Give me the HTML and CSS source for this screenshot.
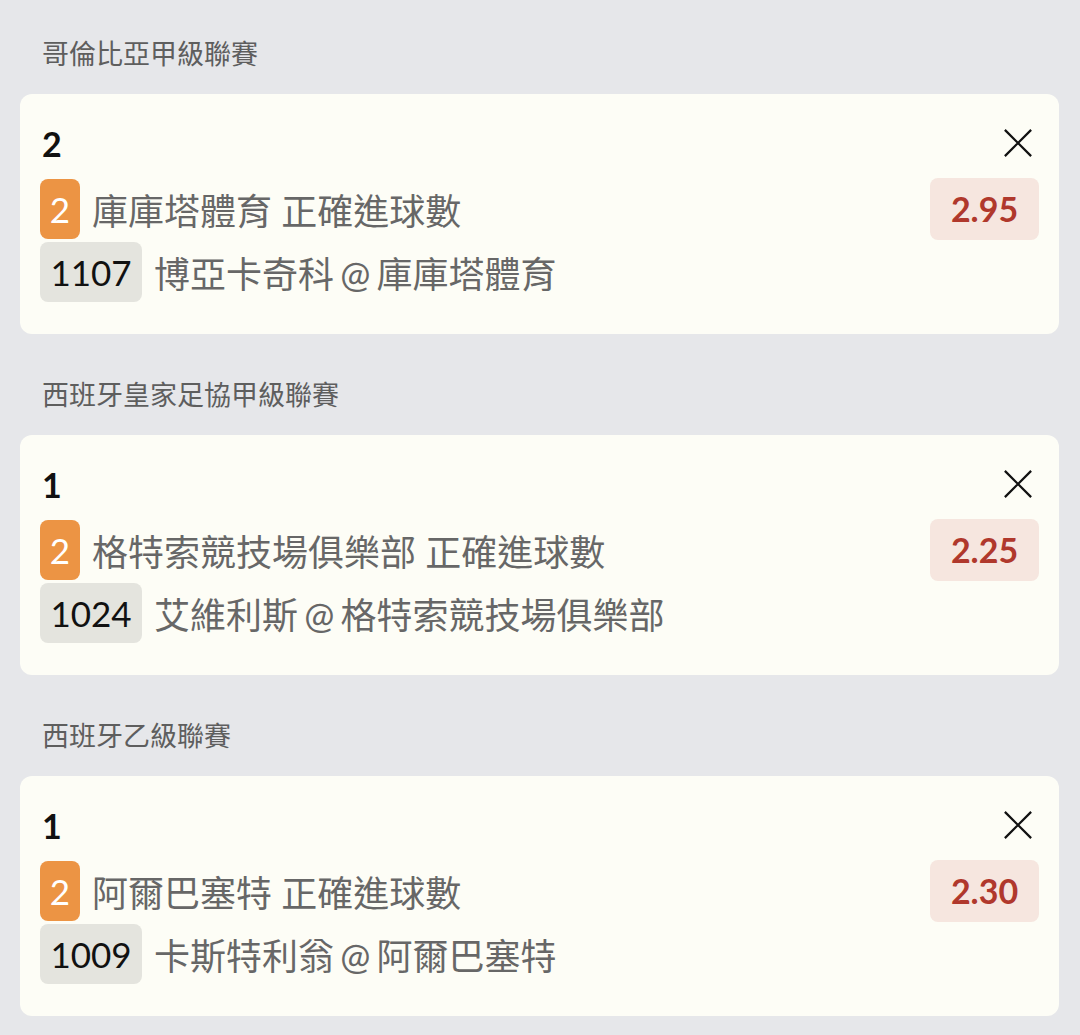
FILE: index.html
```html
<html>
<head>
    <title>投注單</title>
    <link rel="stylesheet" href="styles.css">
</head>
<body>
<div class="slip">
    <div class="section">
        <div class="league">哥倫比亞甲級聯賽</div>
        <div class="card">
            <div class="row top">
                <span class="pick">2</span>
                <svg class="close" viewBox="0 0 32 32"><path d="M2 2L30 30M30 2L2 30"/></svg>
            </div>
            <div class="row">
                <div class="line"><span class="tag">2</span><span class="desc">庫庫塔體育 正確進球數</span></div>
                <span class="odds">2.95</span>
            </div>
            <div class="row">
                <div class="line"><span class="match-no">1107</span><span class="desc teams">博亞卡奇科 @ 庫庫塔體育</span></div>
            </div>
        </div>
    </div>

    <div class="section">
        <div class="league">西班牙皇家足協甲級聯賽</div>
        <div class="card">
            <div class="row top">
                <span class="pick">1</span>
                <svg class="close" viewBox="0 0 32 32"><path d="M2 2L30 30M30 2L2 30"/></svg>
            </div>
            <div class="row">
                <div class="line"><span class="tag">2</span><span class="desc">格特索競技場俱樂部 正確進球數</span></div>
                <span class="odds">2.25</span>
            </div>
            <div class="row">
                <div class="line"><span class="match-no">1024</span><span class="desc teams">艾維利斯 @ 格特索競技場俱樂部</span></div>
            </div>
        </div>
    </div>

    <div class="section">
        <div class="league">西班牙乙級聯賽</div>
        <div class="card">
            <div class="row top">
                <span class="pick">1</span>
                <svg class="close" viewBox="0 0 32 32"><path d="M2 2L30 30M30 2L2 30"/></svg>
            </div>
            <div class="row">
                <div class="line"><span class="tag">2</span><span class="desc">阿爾巴塞特 正確進球數</span></div>
                <span class="odds">2.30</span>
            </div>
            <div class="row">
                <div class="line"><span class="match-no">1009</span><span class="desc teams">卡斯特利翁 @ 阿爾巴塞特</span></div>
            </div>
        </div>
    </div>
</div>
</body>
</html>
```

FILE: styles.css
```css
body {
    margin: 0;
    background-color: #e6e7ea;
    font-family: Lato, "Noto Sans CJK TC", sans-serif;
    color: #222;
}

.slip {
    display: flex;
    flex-direction: column;
    gap: 42px;
    padding: 35px 21px 0 20px;
}

.league {
    padding-left: 22px;
    font-size: 27px;
    line-height: 38px;
    color: #5e5e5e;
    margin-bottom: 21px;
}

.card {
    background-color: #fdfdf6;
    border-radius: 12px;
    padding: 28px 20px 31px 20px;
}

.row {
    display: flex;
    align-items: center;
    justify-content: space-between;
    height: 63px;
}

.row.top {
    height: 42px;
    margin-bottom: 13px;
}

.pick {
    padding-left: 2px;
    font-size: 34px;
    font-weight: 700;
    color: #111;
}

.close {
    width: 30px;
    height: 30px;
    margin-right: 6px;
    fill: none;
    stroke: #111;
    stroke-width: 2.4;
}

.line {
    display: flex;
    align-items: center;
}

.tag,
.match-no {
    display: inline-flex;
    align-items: center;
    justify-content: center;
    height: 60px;
    border-radius: 8px;
    font-size: 35px;
}

.tag {
    width: 40px;
    background-color: #ec9444;
    color: #fff;
}

.match-no {
    width: 102px;
    background-color: #e4e4de;
    color: #111;
}

.desc {
    margin-left: 12px;
    font-size: 36px;
    color: #676767;
}

.desc.teams {
    word-spacing: -3px;
}

.odds {
    display: inline-flex;
    align-items: center;
    justify-content: center;
    width: 109px;
    height: 62px;
    border-radius: 8px;
    background-color: #f6e6df;
    color: #b0382c;
    font-size: 34px;
    font-weight: 700;
}
```
